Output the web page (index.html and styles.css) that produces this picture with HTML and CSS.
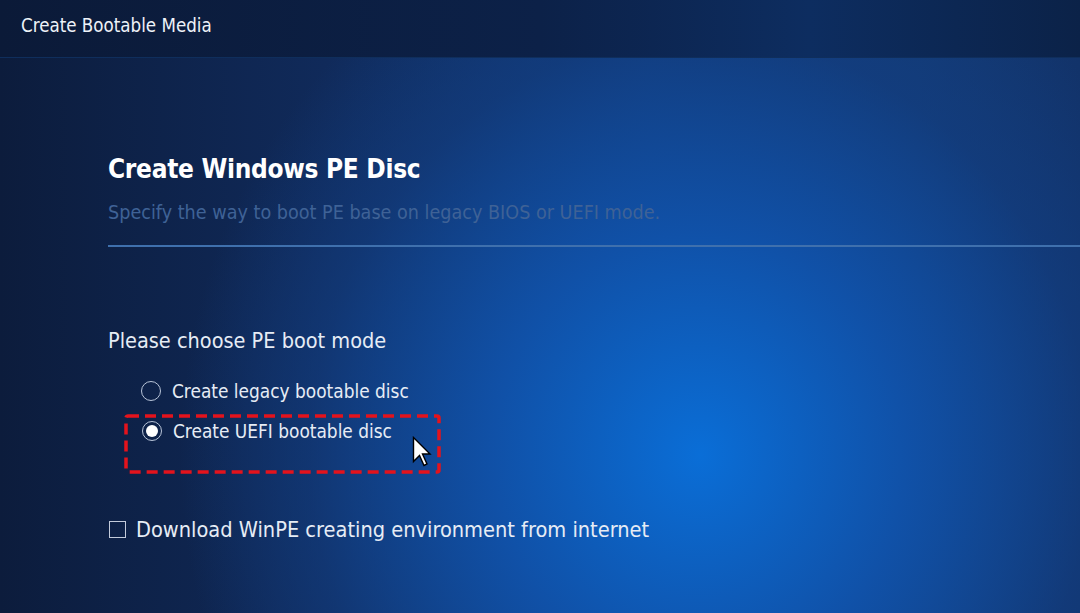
FILE: index.html
```html
<!DOCTYPE html>
<html>
<head>
<meta charset="utf-8">
<link rel="stylesheet" href="styles.css">
</head>
<body>
<div class="app">
  <header class="topbar">Create Bootable Media</header>
  <main class="content">
    <h1 class="title">Create Windows PE Disc</h1>
    <p class="subtitle">Specify the way to boot PE base on legacy BIOS or UEFI mode.</p>
    <div class="divider"></div>
    <p class="question">Please choose PE boot mode</p>
    <div class="options">
      <label class="option"><span class="radio"></span><span>Create legacy bootable disc</span></label>
      <div class="highlight">
        <svg class="dash-frame" width="317" height="60" viewBox="0 0 317 60">
          <rect x="2" y="2" width="313" height="56" rx="2" ry="2" fill="none" stroke="#e4131c" stroke-width="3.5" stroke-dasharray="11 6"/>
        </svg>
        <label class="option"><span class="radio checked"></span><span>Create UEFI bootable disc</span></label>
        <svg class="cursor" width="20" height="31" viewBox="0 0 20 31">
          <path d="M1.5 1.5 L1.5 25.5 L7.5 19.5 L12 29.5 L15 28 L10.5 18 L18 18 Z" fill="#ffffff" stroke="#000000" stroke-width="1.4" stroke-linejoin="miter"/>
        </svg>
      </div>
    </div>
    <label class="download"><span class="checkbox"></span><span>Download WinPE creating environment from internet</span></label>
  </main>
</div>
</body>
</html>
```

FILE: styles.css
```css
* { box-sizing: border-box; }
html, body { margin: 0; padding: 0; }
body {
  width: 1080px;
  height: 613px;
  overflow: hidden;
  font-family: "DejaVu Sans Condensed", "DejaVu Sans", sans-serif;
  color: #e6ecf5;
}
.app {
  width: 1080px;
  height: 613px;
  display: flex;
  flex-direction: column;
  background:
    radial-gradient(ellipse 520px 560px at 700px 455px, rgba(10,110,215,1) 0%, rgba(16,82,170,0.95) 40%, rgba(18,62,130,0.6) 75%, rgba(18,62,130,0) 100%),
    linear-gradient(90deg, #0c1c3c 0%, #102a5a 30%, #123c7c 60%, #133a74 85%, #12336a 100%);
}
.topbar {
  height: 58px;
  flex: none;
  padding-left: 21px;
  padding-top: 15px;
  font-size: 18.6px;
  line-height: 22px;
  color: #eef2f8;
  background: linear-gradient(90deg, #0b1a38 0%, #0c2148 50%, #0d2d60 75%, #0b2248 100%);
  border-bottom: 1px solid #0f2e5c;
}
.content {
  flex: 1;
  padding-left: 108px;
  padding-top: 95px;
  display: flex;
  flex-direction: column;
}
.title {
  margin: 0;
  font-size: 26px;
  font-weight: bold;
  line-height: 32px;
  color: #ffffff;
  letter-spacing: -0.3px;
}
.subtitle {
  margin: 17px 0 0 0;
  font-size: 19.6px;
  line-height: 22px;
  color: #3f6296;
}
.divider {
  margin-top: 21px;
  height: 1.5px;
  background: #3f70ad;
}
.question {
  margin: 81px 0 0 0;
  font-size: 21.5px;
  line-height: 26px;
  color: #e6ecf5;
}
.options {
  margin-top: 26px;
  padding-left: 33px;
  display: flex;
  flex-direction: column;
}
.option {
  display: flex;
  align-items: center;
  gap: 11px;
  font-size: 18.9px;
  line-height: 22px;
  color: #e6ecf5;
}
.radio {
  width: 20px;
  height: 20px;
  flex: none;
  border-radius: 50%;
  border: 1.5px solid #b9c5d9;
  display: flex;
  align-items: center;
  justify-content: center;
}
.radio.checked::after {
  content: "";
  width: 12px;
  height: 12px;
  border-radius: 50%;
  background: #ffffff;
}
.highlight {
  position: relative;
  margin-top: 12px;
  margin-left: -17px;
  width: 317px;
  height: 60px;
  padding: 6px 0 0 18px;
}
.dash-frame {
  position: absolute;
  left: 0;
  top: 0;
}
.cursor {
  position: absolute;
  left: 288px;
  top: 22px;
}
.download {
  margin-top: 43px;
  display: flex;
  align-items: center;
  gap: 10px;
  font-size: 21.6px;
  line-height: 26px;
  color: #e6ecf5;
}
.checkbox {
  width: 17px;
  height: 17px;
  flex: none;
  border: 1.5px solid #c3cbdb;
  margin-left: 1px;
}
```
